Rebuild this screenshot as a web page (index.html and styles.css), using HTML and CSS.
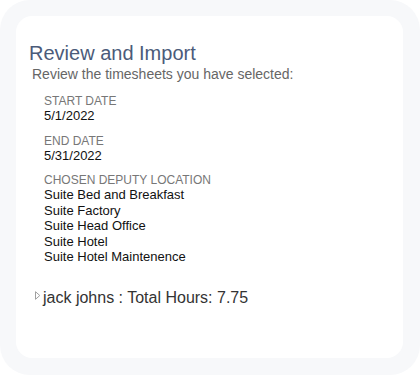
FILE: index.html
```html
<!DOCTYPE html>
<html lang="en">
<head>
    <meta charset="UTF-8">
    <meta name="viewport" content="width=device-width, initial-scale=1.0">
    <link rel="stylesheet" href="styles.css">
</head>
<body>
    <div class="frame">
        <div class="card">
            <h2 class="title">Review and Import</h2>
            <p class="subtitle">Review the timesheets you have selected:</p>
            <div class="info">
                <div class="field">
                    <div class="label">START DATE</div>
                    <div class="value">5/1/2022</div>
                </div>
                <div class="field">
                    <div class="label">END DATE</div>
                    <div class="value">5/31/2022</div>
                </div>
                <div class="field">
                    <div class="label">CHOSEN DEPUTY LOCATION</div>
                    <div class="value">Suite Bed and Breakfast</div>
                    <div class="value">Suite Factory</div>
                    <div class="value">Suite Head Office</div>
                    <div class="value">Suite Hotel</div>
                    <div class="value">Suite Hotel Maintenence</div>
                </div>
            </div>
            <div class="employee">
                <svg class="caret" width="6" height="9" viewBox="0 0 6 9">
                    <path d="M0.5 0.7 L4.8 4.5 L0.5 8.3 Z" fill="none" stroke="#a0a0a0" stroke-width="1"/>
                </svg>
                <span>jack johns : Total Hours: 7.75</span>
            </div>
        </div>
    </div>
</body>
</html>
```

FILE: styles.css
```css
body {
    margin: 0;
    background: #ffffff;
    font-family: "Liberation Sans", Arial, sans-serif;
}
.frame {
    width: 420px;
    height: 375px;
    box-sizing: border-box;
    padding: 16px;
    background: #f7f8fa;
    border-radius: 30px;
}
.card {
    background: #ffffff;
    border-radius: 16px;
    height: 342px;
    width: 387px;
    padding: 25px 0 0 13px;
    box-sizing: border-box;
}
.title {
    margin: 0;
    font-size: 20px;
    font-weight: normal;
    color: #4b5b7a;
    line-height: 24px;
}
.subtitle {
    margin: 1px 0 0 3px;
    font-size: 14px;
    color: #666666;
    line-height: 16px;
}
.info {
    padding: 12px 0 0 15px;
    display: flex;
    flex-direction: column;
    gap: 10px;
}
.label {
    font-size: 12px;
    color: #777777;
    line-height: 14px;
}
.value {
    font-size: 13px;
    color: #111111;
    line-height: 15.5px;
}
.employee {
    display: flex;
    align-items: center;
    gap: 2px;
    margin: 24px 0 0 6px;
    font-size: 16px;
    color: #333333;
}
.caret {
    margin-top: -5px;
}
```
